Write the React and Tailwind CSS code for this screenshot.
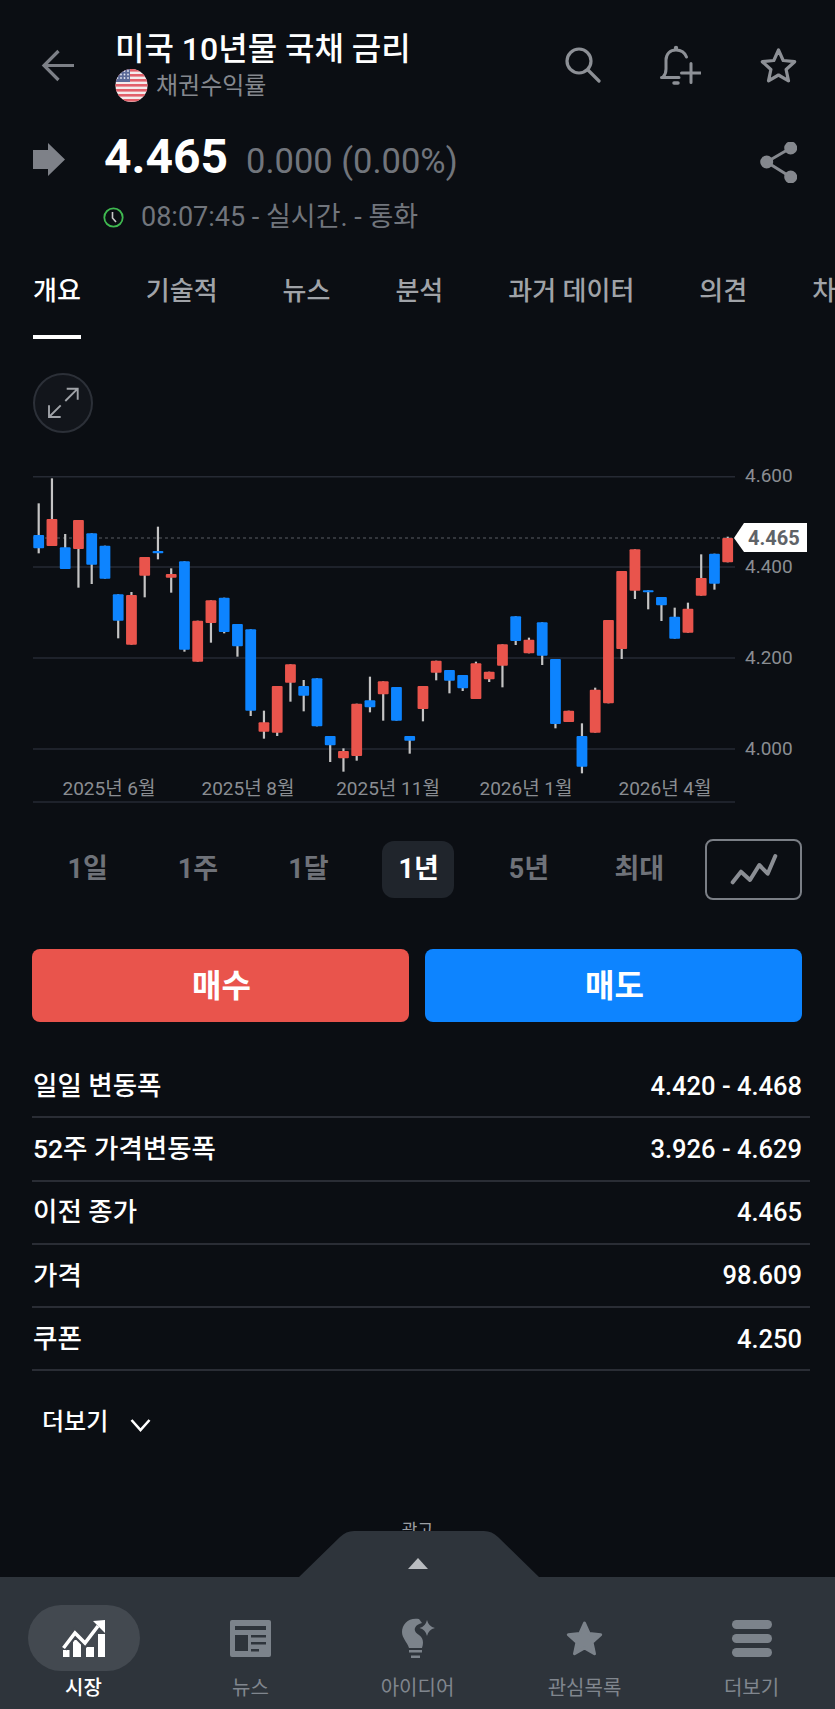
const FONT = "font-['Roboto','Noto_Sans_CJK_KR',sans-serif]";

// chart candles, measured in 3x units from top of the chart crop: [bodyTop, bodyBottom, wickTop, wickBottom, up?]
const candles = [
  [555, 595, 460, 610, 0], [507, 588, 385, 588, 1], [592, 657, 552, 657, 0], [510, 597, 510, 713, 1],
  [550, 644, 550, 702, 0], [587, 686, 587, 686, 0], [733, 812, 733, 865, 0], [735, 884, 726, 884, 1],
  [621, 677, 621, 742, 1], [603, 610, 530, 628, 0], [672, 683, 655, 728, 1], [634, 899, 634, 905, 0],
  [812, 935, 812, 935, 1], [751, 819, 751, 878, 1], [743, 846, 743, 850, 0], [822, 889, 822, 920, 0],
  [838, 1082, 838, 1098, 0], [1117, 1145, 1082, 1166, 1], [1008, 1148, 1008, 1158, 1], [943, 998, 943, 1055, 1],
  [1008, 1037, 990, 1084, 0], [985, 1129, 985, 1129, 0], [1158, 1186, 1158, 1236, 0], [1203, 1225, 1195, 1265, 1],
  [1061, 1218, 1061, 1232, 1], [1051, 1072, 980, 1087, 0], [994, 1033, 994, 1112, 1], [1011, 1112, 1011, 1112, 0],
  [1158, 1172, 1158, 1211, 0], [1008, 1077, 1008, 1114, 1], [932, 968, 932, 991, 1], [960, 992, 960, 1030, 0],
  [975, 1015, 975, 1023, 0], [940, 1047, 935, 1047, 1], [965, 988, 965, 996, 1], [883, 947, 883, 1012, 1],
  [799, 873, 799, 885, 0], [869, 910, 863, 910, 1], [817, 917, 817, 945, 0], [927, 1122, 927, 1135, 0],
  [1082, 1116, 1082, 1116, 1], [1158, 1250, 1120, 1270, 0], [1019, 1148, 1013, 1148, 1], [810, 1060, 810, 1060, 1],
  [663, 897, 663, 927, 1], [598, 722, 598, 747, 1], [721, 724, 721, 778, 0], [741, 766, 741, 813, 0],
  [800, 866, 773, 866, 0], [776, 848, 758, 848, 1], [684, 737, 613, 737, 1], [611, 701, 611, 719, 0],
  [564, 637, 560, 637, 1],
];

const gridLines = [476.7, 567, 658, 749, 802];
const axisLabels = [["4.600", 475], ["4.400", 566], ["4.200", 657], ["4.000", 748]];
const dateLabels = [["2025년 6월", 109], ["2025년 8월", 248], ["2025년 11월", 388], ["2026년 1월", 526], ["2026년 4월", 665]];
const tabs = ["개요", "기술적", "뉴스", "분석", "과거 데이터", "의견", "차트"];
const ranges = ["1일", "1주", "1달", "1년", "5년", "최대"];
const stats = [
  ["일일 변동폭", "4.420 - 4.468"],
  ["52주 가격변동폭", "3.926 - 4.629"],
  ["이전 종가", "4.465"],
  ["가격", "98.609"],
  ["쿠폰", "4.250"],
];

const Flag = () => (
  <svg width="33" height="33" viewBox="0 0 33 33" className="shrink-0">
    <defs>
      <clipPath id="flag-circle"><ellipse cx="16.5" cy="16.5" rx="16" ry="16.5" /></clipPath>
    </defs>
    <g clipPath="url(#flag-circle)">
      <rect width="33" height="33" fill="#f4ecec" />
      {[0, 5, 10, 15, 20, 25, 30].map((y) => (
        <rect key={y} x="0" y={y} width="33" height="2.6" fill="#e2606a" />
      ))}
      <rect width="15" height="13" fill="#5b6a97" />
      {[2, 5.5, 9].map((y) => [2.5, 6, 9.5, 13].map((x) => (
        <circle key={`${x}-${y}`} cx={x} cy={y} r="0.9" fill="#dfe3ee" />
      )))}
    </g>
  </svg>
);

const StarShape = (props) => (
  <polygon
    points="18.5,2 23.2,12.5 34.7,13.7 26.1,21.5 28.5,32.8 18.5,27 8.5,32.8 10.9,21.5 2.3,13.7 13.8,12.5"
    strokeLinejoin="round"
    {...props}
  />
);

const ChartArea = () => (
  <svg width="835" height="350" viewBox="0 460 835 350" className="mt-[27px] block">
    {gridLines.map((y) => (
      <line key={y} x1="33" x2="735" y1={y} y2={y} stroke="#262a34" strokeWidth="1.5" />
    ))}
    <line x1="33" x2="735" y1="538" y2="538" stroke="#5a5d64" strokeWidth="1" strokeDasharray="3 3" />
    {candles.map((c, i) => {
      const x = 38.7 + i * 13.25;
      const color = c[4] ? "#e9544c" : "#0d84ff";
      return (
        <g key={i}>
          <rect x={x - 1.1} y={350 + c[2] / 3} width="2.2" height={(c[3] - c[2]) / 3} fill="#c4c4c4" />
          <rect x={x - 5.4} y={350 + c[0] / 3} width="10.8" height={Math.max((c[1] - c[0]) / 3, 2)} rx="1" fill={color} />
        </g>
      );
    })}
    {axisLabels.map(([t, y]) => (
      <text key={t} x="745" y={y} dominantBaseline="central" className="fill-[#8a8d92] text-[19px]">{t}</text>
    ))}
    {dateLabels.map(([t, x]) => (
      <text key={t} x={x} y="788" textAnchor="middle" dominantBaseline="central" className="fill-[#8a8d92] text-[19px]">{t}</text>
    ))}
    <polygon points="734,538 744,523 807,523 807,552 744,552" fill="#ffffff" />
    <text x="748" y="538" dominantBaseline="central" className="fill-[#5f6368] text-[20px] font-bold">4.465</text>
  </svg>
);

const App = () => {
  return (
    <div className={`${FONT} relative h-[1709px] w-[835px] overflow-hidden bg-[#0b0e13] text-white`}>
      {/* Header */}
      <div className="flex h-[118px] items-start pl-[41px] pr-[38px] pt-[29px]">
        <svg width="34" height="34" viewBox="0 0 34 34" fill="none" stroke="#7d8087" strokeWidth="3.2" className="mt-[20px] shrink-0">
          <path d="M33 16.5H3M17.5 2L3 16.5L17.5 31" />
        </svg>
        <div className="ml-[40px] flex flex-col">
          <h1 className="text-[32px] leading-[40px] font-medium">미국 10년물 국채 금리</h1>
          <div className="flex h-[33px] items-center gap-[8px]">
            <Flag />
            <span className="text-[24px] text-[#85888e]">채권수익률</span>
          </div>
        </div>
        <div className="ml-auto flex items-start">
          <svg width="36" height="36" viewBox="0 0 36 36" fill="none" stroke="#8d9096" strokeWidth="3.2" strokeLinecap="round" className="mt-[18px]">
            <circle cx="14" cy="14" r="12" />
            <path d="M23 23L34 34" />
          </svg>
          <svg width="41" height="40" viewBox="0 0 41 40" fill="none" stroke="#8d9096" strokeWidth="3" strokeLinecap="round" className="ml-[59px] mt-[16px]">
            <circle cx="16" cy="3" r="2.2" fill="#8d9096" stroke="none" />
            <path d="M1.5 32.5H19M3 32Q6 29 6 24V15C6 9 10 5 16 5C21 5 25 8 26.5 12" />
            <path d="M31 18.5V37.5M21.5 28H40.5" />
            <path d="M14 38H18" strokeWidth="3.5" />
          </svg>
          <svg width="37" height="35" viewBox="0 0 37 35" fill="none" className="ml-[59px] mt-[19px]">
            <StarShape stroke="#8d9096" strokeWidth="3.2" />
          </svg>
        </div>
      </div>

      {/* Price */}
      <div className="mt-[12px] flex h-[54px] items-center pl-[33px] pr-[38px]">
        <svg width="32" height="33" viewBox="0 0 32 33" className="mt-[5px] shrink-0">
          <polygon points="0,7 15,7 15,0 32,16.5 15,33 15,26 0,26" fill="#7e8188" />
        </svg>
        <div className="ml-[39px] flex items-baseline">
          <span className="text-[48px] leading-none font-bold">4.465</span>
          <span className="ml-[18px] text-[34.5px] leading-none text-[#71757c]">0.000 (0.00%)</span>
        </div>
        <svg width="37" height="41" viewBox="0 0 37 41" fill="#85888e" stroke="#85888e" strokeWidth="3" className="ml-auto mt-[10px]">
          <circle cx="30.7" cy="6" r="5" />
          <circle cx="6.7" cy="20" r="5" />
          <circle cx="30.7" cy="35" r="5" />
          <path d="M30.7 6L6.7 20L30.7 35" fill="none" />
        </svg>
      </div>

      <div className="mt-[21px] flex h-[24px] items-center pl-[103px]">
        <svg width="21" height="21" viewBox="0 0 21 21" fill="none" className="shrink-0">
          <circle cx="10.5" cy="10.5" r="9.2" stroke="#3fb950" strokeWidth="1.8" />
          <path d="M9.5 5V11L13 15" stroke="#c9c9c9" strokeWidth="1.6" />
        </svg>
        <span className="ml-[17px] text-[27px] leading-none whitespace-nowrap text-[#71757c]">08:07:45 - 실시간. - 통화</span>
      </div>

      {/* Tabs */}
      <div className="mt-[36px] flex gap-[65px] overflow-hidden pl-[33px] whitespace-nowrap">
        {tabs.map((t, i) => (
          <div key={t} className="flex flex-col">
            <span className={`h-[52px] text-[26px] leading-[52px] font-medium ${i === 0 ? "text-white" : "text-[#a0a3a8]"}`}>{t}</span>
            <span className={`mt-[18px] h-[4px] ${i === 0 ? "bg-white" : ""}`} />
          </div>
        ))}
      </div>

      {/* Chart */}
      <button className="ml-[33px] mt-[34px] flex h-[60px] w-[60px] items-center justify-center rounded-full border-2 border-[#2c3038] bg-[#12151b]">
        <svg width="60" height="60" viewBox="0 0 60 60" fill="none" stroke="#a0a3a8" strokeWidth="1.9" className="shrink-0">
          <path d="M32.3 28L44.7 15.7M33.7 15.7H44.7V26.7M27.7 32.3L16 44M16 32.3V44H27.7" />
        </svg>
      </button>
      <ChartArea />

      {/* Ranges */}
      <div className="mt-[29px] flex h-[61px] items-center pl-[32px]">
        <div className="grid w-[662px] grid-cols-6">
          {ranges.map((r) => (
            <div key={r} className="flex justify-center">
              <span className={`flex h-[57px] w-[72px] items-center justify-center rounded-xl pl-[1px] text-[27px] font-bold ${r === "1년" ? "bg-[#20252c] text-white" : "text-[#6f7279]"}`}>{r}</span>
            </div>
          ))}
        </div>
        <div className="ml-[11px] flex h-[61px] w-[97px] items-center justify-center rounded-lg border-2 border-[#7b7f86]">
          <svg width="96" height="61" viewBox="0 0 96 61" fill="none" stroke="#8b8e94" strokeWidth="4" strokeLinecap="round" strokeLinejoin="round" className="shrink-0">
            <path d="M26.7 43.3L35 32.7L44 41L53.3 26L61.7 34.7L69.3 17" />
          </svg>
        </div>
      </div>

      {/* Buy / sell */}
      <div className="mt-[49px] flex gap-[16px] pl-[32px] pr-[33px]">
        <button className="h-[73px] flex-1 rounded-lg bg-[#e9544c] pl-[2px] text-[32px] font-bold text-white">매수</button>
        <button className="h-[73px] flex-1 rounded-lg bg-[#0d84ff] pl-[2px] text-[32px] font-bold text-white">매도</button>
      </div>

      {/* Stats */}
      <div className="ml-[32px] mt-[33px] w-[778px]">
        {stats.map(([label, value]) => (
          <div key={label} className="flex h-[63.25px] items-center justify-between border-b-2 border-[#2a2d35] pl-[1px] pr-[8px]">
            <span className="text-[26.5px] font-medium">{label}</span>
            <span className="text-[25.5px] font-medium">{value}</span>
          </div>
        ))}
      </div>

      <div className="ml-[42px] mt-[37px] flex h-[28px] items-center">
        <span className="text-[24px] font-medium">더보기</span>
        <svg width="21" height="14" viewBox="0 0 21 14" fill="none" stroke="#ffffff" strokeWidth="2.6" className="ml-[22px] mt-[6px]">
          <path d="M1.5 2L10.5 12L19.5 2" />
        </svg>
      </div>

      <div className="mt-[83px] h-[22px] text-center text-[17px] leading-[22px] text-[#9b9ea3]">광고</div>

      {/* Bottom nav */}
      <nav className="relative mt-[36px] h-[133px] bg-[#2e343b]">
        <svg width="242" height="47" viewBox="0 0 242 47" className="absolute left-[298px] top-[-46px]">
          <path d="M0 47L42 6Q48 0 56 0H186Q194 0 200 6L242 47Z" fill="#2e343b" />
        </svg>
        <svg width="20" height="11" viewBox="0 0 20 11" className="absolute left-[408px] top-[-19px]">
          <polygon points="10,0 20,11 0,11" fill="#b9bcc0" />
        </svg>
        <div className="grid grid-cols-5 pt-[28px]">
          <div className="flex flex-col items-center">
            <div className="flex h-[66px] w-[112px] items-center justify-center rounded-full bg-[#434950]">
              <svg width="43" height="37" viewBox="0 0 43 37">
                <g fill="#ffffff">
                  <rect x="1" y="30" width="6.5" height="7" />
                  <rect x="11" y="20" width="8" height="17" />
                  <rect x="24" y="27" width="8" height="10" />
                  <rect x="36" y="14" width="7" height="23" />
                </g>
                <path d="M1.5 28L13 13L23 23L36 6" fill="none" stroke="#434950" strokeWidth="8" />
                <path d="M1.5 28L13 13L23 23L36 6" fill="none" stroke="#ffffff" strokeWidth="3.6" />
                <polygon points="31,1 43,0 43,13" fill="#ffffff" />
              </svg>
            </div>
            <span className="mt-[3px] text-[20px] leading-[28px] font-medium text-white">시장</span>
          </div>
          <div className="flex flex-col items-center">
            <div className="flex h-[66px] items-center justify-center">
              <svg width="41" height="37" viewBox="0 0 41 37">
                <rect width="41" height="37" rx="2" fill="#7c838b" />
                <g fill="#2e343b">
                  <rect x="5" y="6" width="31" height="4" />
                  <rect x="5" y="15" width="13" height="16" />
                  <rect x="21" y="15" width="15" height="2.5" />
                  <rect x="21" y="22" width="15" height="2.5" />
                  <rect x="21" y="29" width="8" height="2.5" />
                </g>
              </svg>
            </div>
            <span className="mt-[3px] text-[20px] leading-[28px] text-[#80868e]">뉴스</span>
          </div>
          <div className="flex flex-col items-center">
            <div className="flex h-[66px] items-center justify-center">
              <svg width="34" height="41" viewBox="0 0 34 41" fill="#7c838b">
                <path d="M18 1C8 -1 1 6 1 14C1 20 6 24 8 30H21C23 24 22 20 18 17C15 15 13 13 14 10C15 7 18 6 21 5Z" />
                <path d="M26 2Q27.5 8.5 34 10Q27.5 11.5 26 18Q24.5 11.5 18.5 10Q24.5 8.5 26 2Z" />
                <rect x="8" y="32" width="13" height="2.5" />
                <rect x="10" y="37.5" width="9" height="2.5" />
              </svg>
            </div>
            <span className="mt-[3px] text-[20px] leading-[28px] text-[#80868e]">아이디어</span>
          </div>
          <div className="flex flex-col items-center">
            <div className="flex h-[66px] items-center justify-center">
              <svg width="37" height="35" viewBox="0 0 37 35">
                <StarShape fill="#7c838b" stroke="#7c838b" strokeWidth="3" />
              </svg>
            </div>
            <span className="mt-[3px] text-[20px] leading-[28px] text-[#80868e]">관심목록</span>
          </div>
          <div className="flex flex-col items-center">
            <div className="flex h-[66px] flex-col items-center justify-center gap-[5px]">
              <span className="h-[9px] w-[40px] rounded-full bg-[#7c838b]" />
              <span className="h-[9px] w-[40px] rounded-full bg-[#7c838b]" />
              <span className="h-[9px] w-[40px] rounded-full bg-[#7c838b]" />
            </div>
            <span className="mt-[3px] text-[20px] leading-[28px] text-[#80868e]">더보기</span>
          </div>
        </div>
      </nav>
    </div>
  );
};

export default App;
